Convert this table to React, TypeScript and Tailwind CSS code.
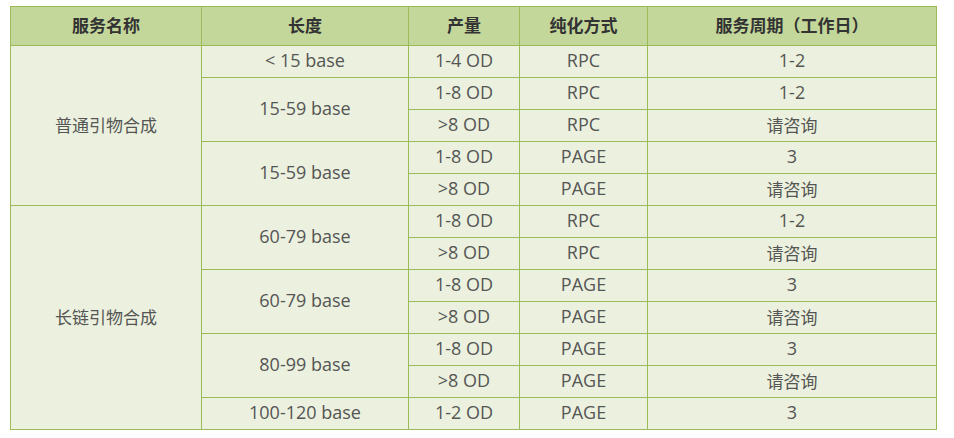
const rows: { name?: [string, number]; len?: [string, number]; qty: string; method: string; cycle: string }[] = [
  { name: ['普通引物合成', 5], len: ['< 15 base', 1], qty: '1-4 OD', method: 'RPC', cycle: '1-2' },
  { len: ['15-59 base', 2], qty: '1-8 OD', method: 'RPC', cycle: '1-2' },
  { qty: '>8 OD', method: 'RPC', cycle: '请咨询' },
  { len: ['15-59 base', 2], qty: '1-8 OD', method: 'PAGE', cycle: '3' },
  { qty: '>8 OD', method: 'PAGE', cycle: '请咨询' },
  { name: ['长链引物合成', 7], len: ['60-79 base', 2], qty: '1-8 OD', method: 'RPC', cycle: '1-2' },
  { qty: '>8 OD', method: 'RPC', cycle: '请咨询' },
  { len: ['60-79 base', 2], qty: '1-8 OD', method: 'PAGE', cycle: '3' },
  { qty: '>8 OD', method: 'PAGE', cycle: '请咨询' },
  { len: ['80-99 base', 2], qty: '1-8 OD', method: 'PAGE', cycle: '3' },
  { qty: '>8 OD', method: 'PAGE', cycle: '请咨询' },
  { len: ['100-120 base', 1], qty: '1-2 OD', method: 'PAGE', cycle: '3' },
];

const th = 'border border-[#9bbb59] font-bold text-[#333] pb-[4px]';
const td = 'border border-[#9bbb59] p-0 pb-[3px]';

// Latin cells use a wider face, CJK cells stay on Noto Sans CJK
const isLatin = (s: string) => !/[\u4e00-\u9fff]/.test(s);

function Cell({ text, span }: { text: string; span?: number }) {
  return (
    <td
      rowSpan={span}
      className={td + (isLatin(text) ? ' font-["Open_Sans",sans-serif] text-[18px]' : '')}
    >
      {text}
    </td>
  );
}

export default function App() {
  return (
    <div
      className="bg-white w-[954px] h-[438px] pt-[6px] pl-[10px]"
      style={{ fontFamily: '"Noto Sans CJK SC", "Noto Sans", sans-serif' }}
    >
      <table className="table-fixed border-collapse w-[926px] text-center text-[17px] leading-none">
        <colgroup>
          <col className="w-[191px]" />
          <col className="w-[207px]" />
          <col className="w-[111px]" />
          <col className="w-[128px]" />
          <col className="w-[289px]" />
        </colgroup>
        <thead>
          <tr className="h-[39px] bg-[#c4d79b]">
            <th className={th}>服务名称</th>
            <th className={th}>长度</th>
            <th className={th}>产量</th>
            <th className={th}>纯化方式</th>
            <th className={th}>服务周期（工作日）</th>
          </tr>
        </thead>
        <tbody className="bg-[#ebf1de] text-[#555]">
          {rows.map((r, i) => (
            <tr key={i} className="h-[32px]">
              {r.name && <Cell text={r.name[0]} span={r.name[1]} />}
              {r.len && <Cell text={r.len[0]} span={r.len[1]} />}
              <Cell text={r.qty} />
              <Cell text={r.method} />
              <Cell text={r.cycle} />
            </tr>
          ))}
        </tbody>
      </table>
    </div>
  );
}
